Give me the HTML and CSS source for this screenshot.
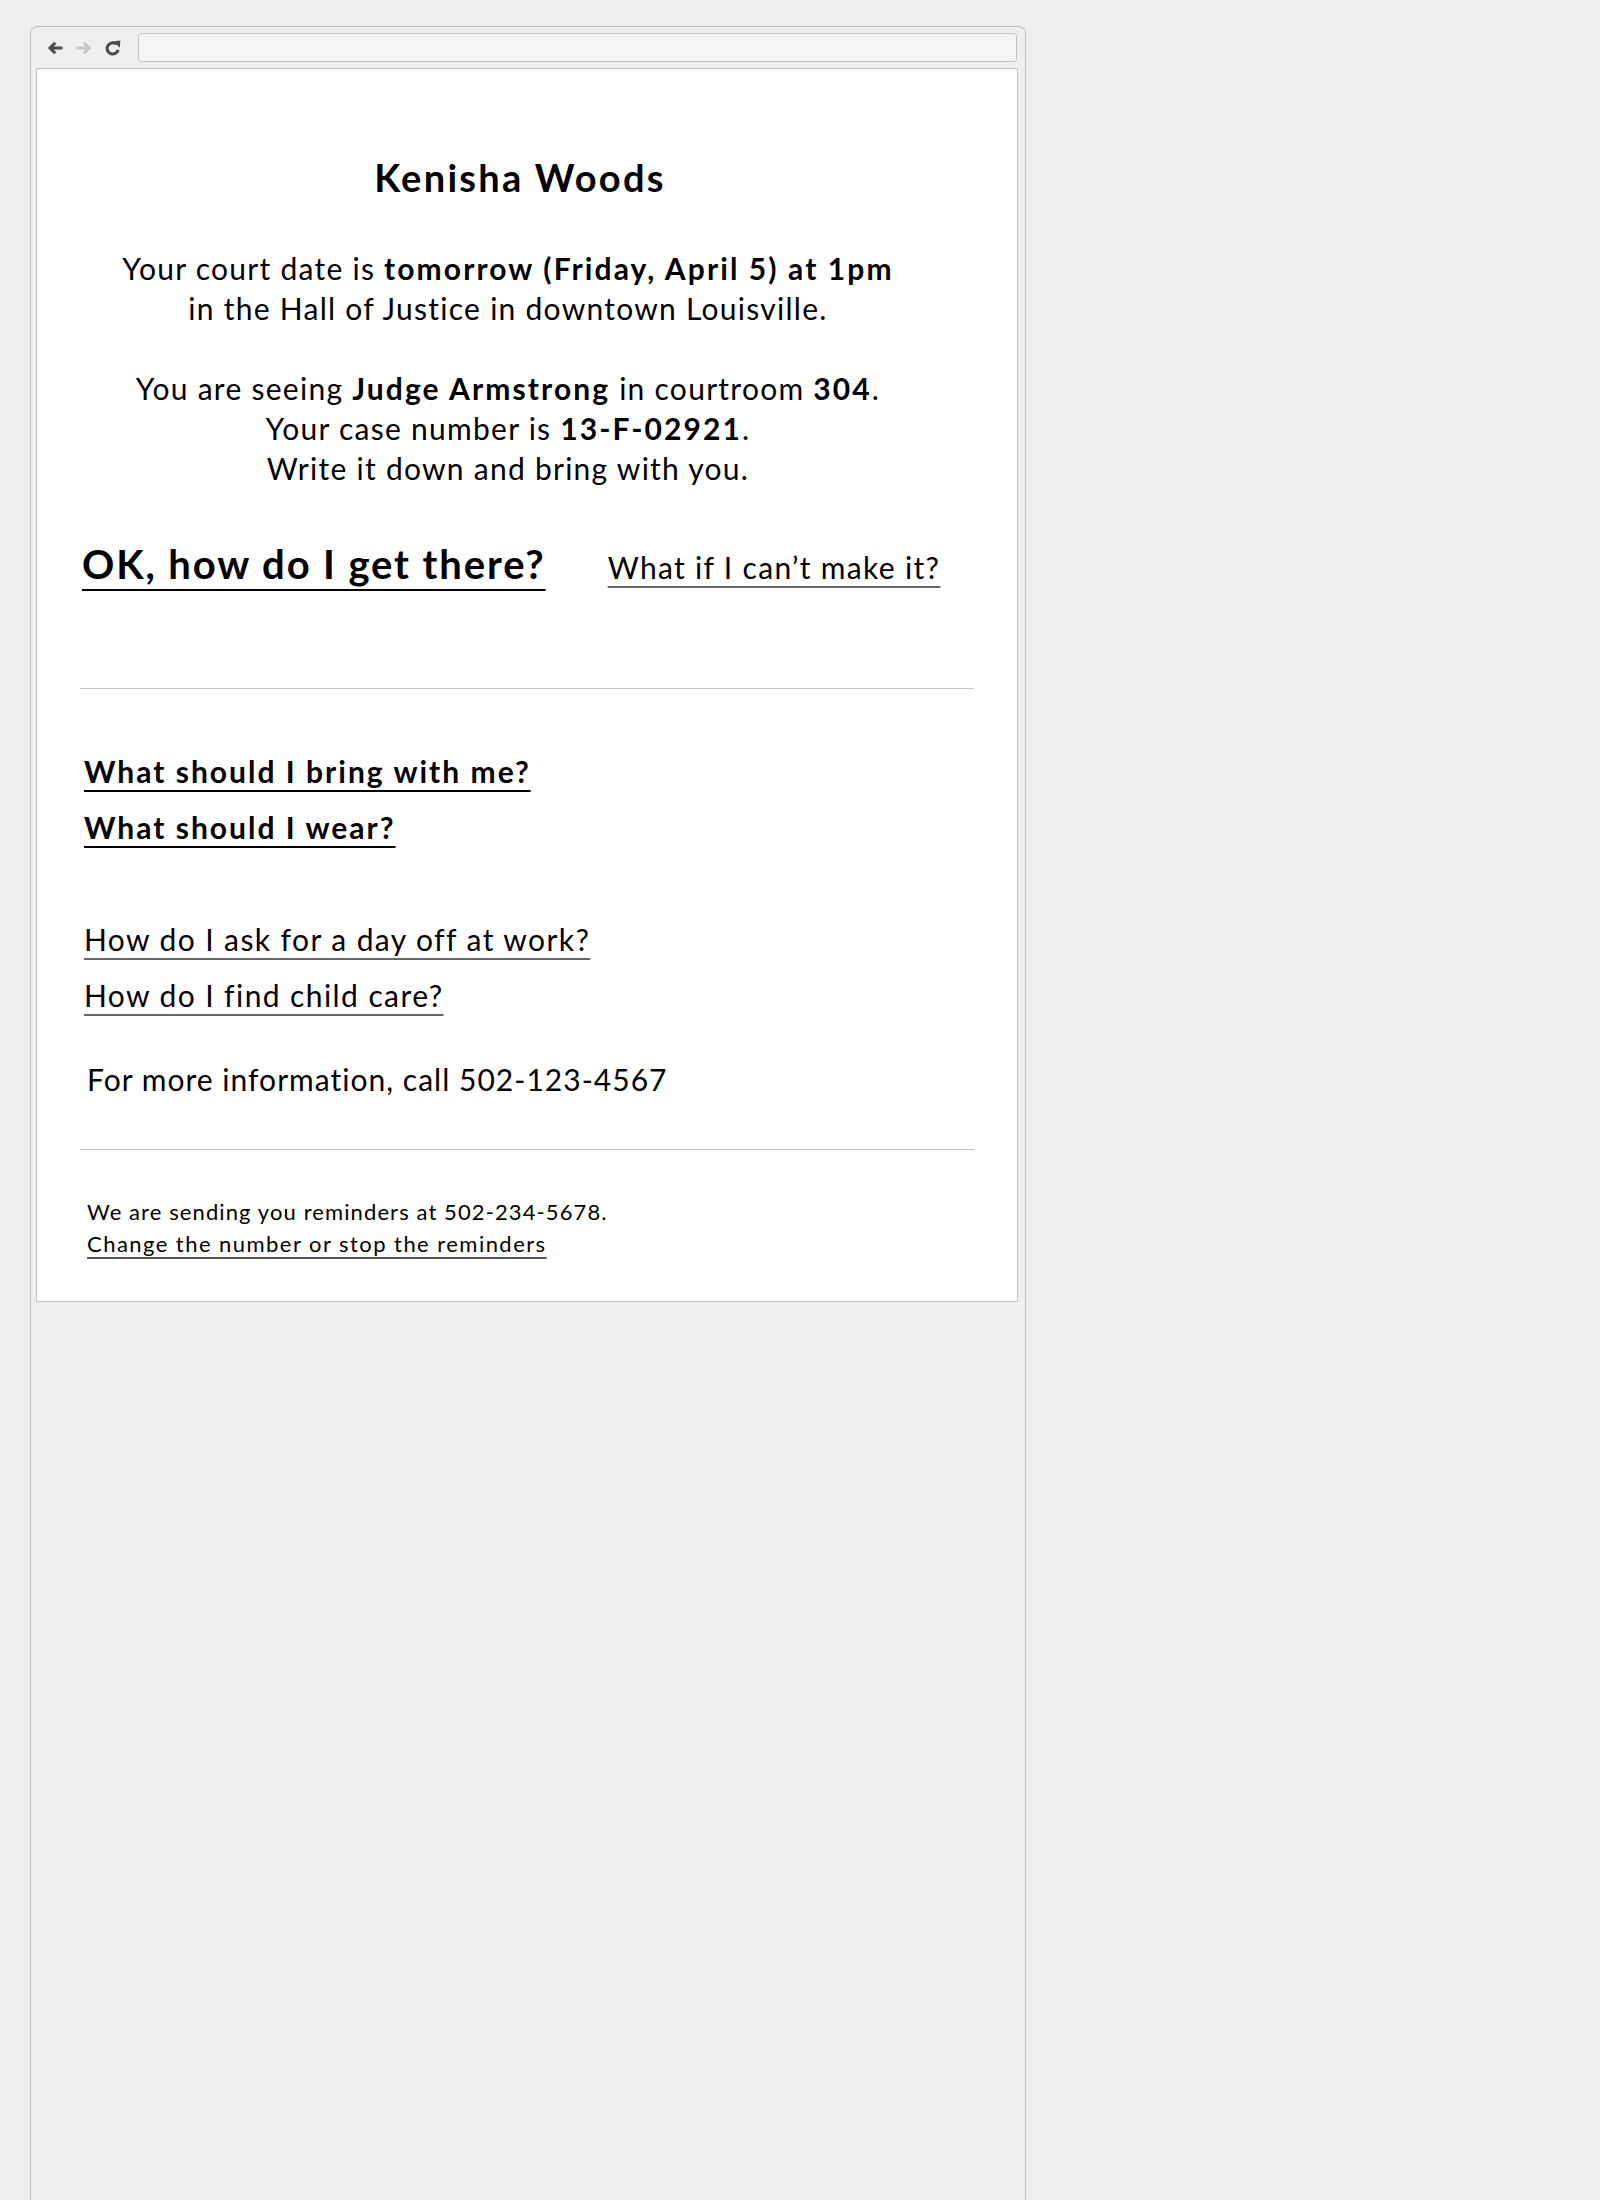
FILE: index.html
```html
<!DOCTYPE html>
<html lang="en">
<head>
<meta charset="utf-8">
<title>Court reminder</title>
<link rel="stylesheet" href="styles.css">
</head>
<body>
<div class="window">
  <div class="toolbar">
    <div class="nav">
      <svg class="icon back" viewBox="0 0 16 14" width="16" height="14"><path d="M15.5 7H3.5M8.2 1.8L3 7L8.2 12.2" fill="none" stroke="currentColor" stroke-width="3"/></svg>
      <svg class="icon fwd" viewBox="0 0 16 14" width="16" height="14"><path d="M0.5 7H12.5M7.8 1.8L13 7L7.8 12.2" fill="none" stroke="currentColor" stroke-width="3"/></svg>
      <svg class="icon reload" viewBox="0 0 16 16" width="16" height="16"><path d="M13.2 9.8A5.6 5.6 0 1 1 11.4 4.2" fill="none" stroke="currentColor" stroke-width="3"/><path d="M8.4 1.6L15.4 0.6L14.8 7.8Z" fill="currentColor"/></svg>
    </div>
    <div class="address"></div>
  </div>
  <div class="content">
    <h1 class="name">Kenisha Woods</h1>
    <p class="info">Your court date is <b>tomorrow (Friday, April 5) at 1pm</b><br>in the Hall of Justice in downtown Louisville.</p>
    <p class="info second">You are seeing <b>Judge Armstrong</b> in courtroom <b>304</b>.<br>Your case number is <b>13-F-02921</b>.<br>Write it down and bring with you.</p>
    <div class="actions">
      <a class="primary" href="#">OK, how do I get there?</a>
      <a class="secondary" href="#">What if I can’t make it?</a>
    </div>
    <hr class="rule first">
    <div class="links strong">
      <a href="#">What should I bring with me?</a>
      <a href="#">What should I wear?</a>
    </div>
    <div class="links light">
      <a href="#">How do I ask for a day off at work?</a>
      <a href="#">How do I find child care?</a>
    </div>
    <p class="more">For more information, call 502-123-4567</p>
    <hr class="rule last">
    <div class="footer">
      <p>We are sending you reminders at 502-234-5678.</p>
      <a href="#">Change the number or stop the reminders</a>
    </div>
  </div>
</div>
</body>
</html>
```
FILE: styles.css
```css
html, body {
  margin: 0;
  padding: 0;
  background: #efefef;
}
body {
  font-family: Lato, "Open Sans", sans-serif;
  color: #000;
}
.window {
  margin: 26px 0 0 30px;
  width: 996px;
  min-height: 2200px;
  box-sizing: border-box;
  border: 1px solid #bfbfbf;
  border-bottom: none;
  border-radius: 7px 7px 0 0;
  background: #efefef;
}
.toolbar {
  display: flex;
  align-items: center;
  padding: 6px 8px 0 16px;
}
.nav {
  display: flex;
  align-items: center;
  gap: 13px;
  height: 29px;
}
.icon { display: block; }
.back, .reload { color: #4a4a4a; }
.fwd { color: #c6c6c6; }
.address {
  flex: 1;
  margin-left: 17px;
  height: 27px;
  border: 1px solid #c2c2c2;
  border-radius: 3px;
  background: #f4f4f4;
}
.content {
  margin: 6px 7px 0 5px;
  background: #fff;
  border: 1px solid #c2c2c2;
  padding: 85px 43px 41px 43px;
}
.name {
  margin: 0;
  padding-right: 14px;
  text-align: center;
  font-size: 38px;
  line-height: 46px;
  font-weight: 700;
  letter-spacing: 0.06em;
}
.info {
  margin: 48px 0 0 0;
  padding-right: 38px;
  text-align: center;
  font-size: 30px;
  line-height: 40px;
  letter-spacing: 0.042em;
}
.info.second { margin-top: 40px; }
.info b { font-weight: 700; letter-spacing: 0.07em; }
a {
  color: #000;
  text-decoration-line: underline;
  text-decoration-skip-ink: none;
}
.actions {
  display: flex;
  align-items: baseline;
  margin-top: 52px;
  padding-left: 2px;
  line-height: 48px;
}
.primary {
  font-size: 40px;
  font-weight: 700;
  letter-spacing: 0.047em;
  text-decoration-thickness: 2px;
  text-underline-offset: 10px;
}
.secondary {
  margin-left: 62px;
  font-size: 30px;
  letter-spacing: 0.044em;
  text-decoration-color: #666;
  text-decoration-thickness: 2px;
  text-underline-offset: 7px;
}
.rule {
  border: none;
  border-top: 1px solid #c4c4c4;
  margin: 0;
}
.rule.first { margin-top: 97px; }
.links {
  display: flex;
  flex-direction: column;
  align-items: flex-start;
  gap: 16px;
  padding-left: 4px;
  font-size: 30px;
  line-height: 40px;
}
.links.strong { margin-top: 62px; }
.links.strong a {
  font-weight: 700;
  letter-spacing: 0.067em;
  text-decoration-thickness: 2px;
  text-underline-offset: 7px;
}
.links.light { margin-top: 72px; }
.links.light a {
  letter-spacing: 0.047em;
  text-decoration-color: #666;
  text-decoration-thickness: 2px;
  text-underline-offset: 7px;
}
.more {
  margin: 44px 0 0 0;
  padding-left: 7px;
  font-size: 30px;
  line-height: 40px;
  letter-spacing: 0.034em;
}
.rule.last { margin-top: 50px; }
.footer {
  margin-top: 46px;
  padding-left: 7px;
  font-size: 22px;
  line-height: 32px;
  letter-spacing: 0.05em;
}
.footer p { margin: 0; }
.footer a {
  letter-spacing: 0.066em;
  text-decoration-color: #555;
  text-decoration-thickness: 2px;
  text-underline-offset: 5px;
}
```
